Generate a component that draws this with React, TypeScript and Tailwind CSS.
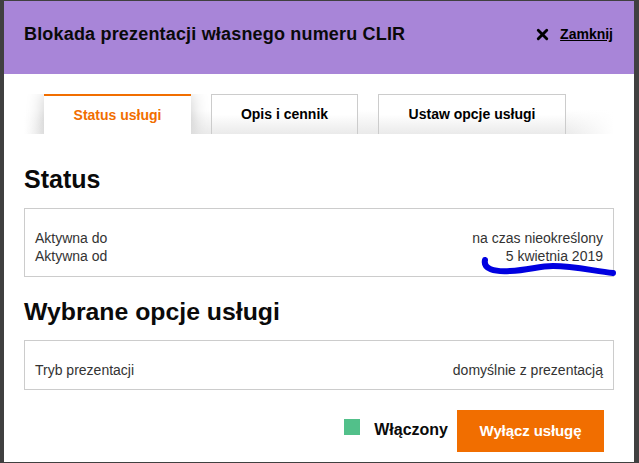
import { X } from "lucide-react";

const font = { fontFamily: '"Liberation Sans", Arial, sans-serif' };

function Row({ label, value }: { label: string; value: string }) {
  return (
    <div className="flex justify-between h-[18px] leading-[18px]">
      <span>{label}</span>
      <span>{value}</span>
    </div>
  );
}

export default function App() {
  return (
    <div className="h-[463px] w-[639px] overflow-hidden bg-[#404040] pt-px pl-1" style={font}>
      <div className="relative h-[461px] w-[630px] bg-white text-black">
        {/* Header */}
        <div className="flex h-[73px] items-center justify-between bg-[#a885d8] pl-5 pr-[21px] pb-[6px]">
          <h1 className="text-[18px] font-bold tracking-[0.18px] text-[#0a0a0a]">Blokada prezentacji własnego numeru CLIR</h1>
          <div className="flex items-center gap-[9px]">
            <X className="w-[17px] h-[17px]" strokeWidth={4} />
            <a className="text-[14px] font-bold underline">Zamknij</a>
          </div>
        </div>

        {/* Tabs */}
        <div className="mt-5 mx-5 flex h-10 w-[590px] overflow-hidden bg-gradient-to-b from-white from-40% to-[#eaeaea]">
          <div className="w-5 bg-gradient-to-r from-white to-transparent" />
          <div className="flex w-[147px] items-center justify-center border-t-2 border-[#f16e00] bg-white text-[14px] font-bold text-[#f16e00] shadow-[0_0_18px_rgba(0,0,0,0.22)]">
            Status usługi
          </div>
          <div className="w-5" />
          <div className="flex w-[147px] items-center justify-center border border-b-0 border-[#cccccc] bg-gradient-to-b from-white from-50% to-[#eaeaea] text-[14px] font-bold">
            Opis i cennik
          </div>
          <div className="w-5" />
          <div className="flex w-[188px] items-center justify-center border border-b-0 border-[#cccccc] bg-gradient-to-b from-white from-50% to-[#eaeaea] text-[14px] font-bold">
            Ustaw opcje usługi
          </div>
          <div className="flex-1 bg-gradient-to-r from-transparent to-white" />
        </div>

        {/* Content */}
        <div className="px-5">
          <h2 className="mt-[29px] h-[32px] text-[25px] leading-[32px] font-bold text-[#0a0a0a]">Status</h2>
          <div className="mt-[13px] h-[69px] border border-[#cccccc] pt-5 pl-[10px] pr-[10px] text-[14px] text-[#333333]">
            <Row label="Aktywna do" value="na czas nieokreślony" />
            <Row label="Aktywna od" value="5 kwietnia 2019" />
          </div>
          <h2 className="mt-[19px] h-[32px] text-[24.8px] leading-[32px] font-bold text-[#0a0a0a]">Wybrane opcje usługi</h2>
          <div className="mt-3 h-[50px] border border-[#cccccc] pt-5 pl-[10px] pr-[10px] text-[14px] text-[#333333]">
            <Row label="Tryb prezentacji" value="domyślnie z prezentacją" />
          </div>
          <div className="mt-5 flex justify-end pr-[10px]">
            <div className="mt-[9px] h-4 w-4 bg-[#52c08a]" />
            <span className="ml-[14px] mr-[9px] mt-[9px] text-[16px] leading-[22px] font-bold text-[#0a0a0a]">Włączony</span>
            <button className="h-[42px] w-[147px] bg-[#f16e00] text-[15px] tracking-[-0.1px] font-bold text-white">Wyłącz usługę</button>
          </div>
        </div>

        {/* Marker scribble drawn over the page */}
        <svg className="absolute left-0 top-0 pointer-events-none" width="630" height="461" fill="none">
          <path
            d="M481 259 C479 268 490 271 506 270 C525 269 535 265 549 265 C570 265 590 270 609 272"
            stroke="#0000e0"
            strokeWidth="6"
            strokeLinecap="round"
          />
        </svg>
      </div>
    </div>
  );
}
